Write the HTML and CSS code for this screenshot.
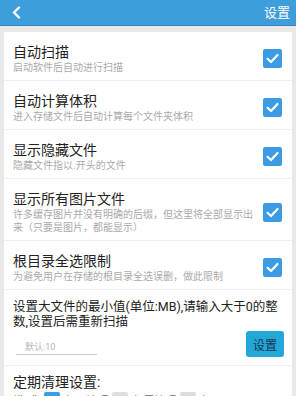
FILE: index.html
```html
<!DOCTYPE html>
<html>
<head>
  <meta charset="utf-8">
  <title>设置</title>
  <link rel="stylesheet" href="styles.css">
</head>
<body>
  <div class="topbar">
    <span class="back">
      <svg width="9" height="13" viewBox="0 0 9 13"><path d="M7 1.5 L2 6.5 L7 11.5" fill="none" stroke="#fff" stroke-width="2.4" stroke-linecap="round" stroke-linejoin="round"/></svg>
    </span>
    <span class="title">设置</span>
  </div>

  <div class="card">
    <!-- checkbox rows -->
    <div class="row">
      <div class="text">
        <div class="name">自动扫描</div>
        <div class="desc">启动软件后自动进行扫描</div>
      </div>
      <span class="check"><svg width="19" height="19" viewBox="0 0 19 19"><path d="M4.5 9.8 L8 13 L14.5 6" fill="none" stroke="#fff" stroke-width="2.2" stroke-linecap="round" stroke-linejoin="round"/></svg></span>
    </div>

    <div class="row">
      <div class="text">
        <div class="name">自动计算体积</div>
        <div class="desc">进入存储文件后自动计算每个文件夹体积</div>
      </div>
      <span class="check"><svg width="19" height="19" viewBox="0 0 19 19"><path d="M4.5 9.8 L8 13 L14.5 6" fill="none" stroke="#fff" stroke-width="2.2" stroke-linecap="round" stroke-linejoin="round"/></svg></span>
    </div>

    <div class="row">
      <div class="text">
        <div class="name">显示隐藏文件</div>
        <div class="desc">隐藏文件指以.开头的文件</div>
      </div>
      <span class="check"><svg width="19" height="19" viewBox="0 0 19 19"><path d="M4.5 9.8 L8 13 L14.5 6" fill="none" stroke="#fff" stroke-width="2.2" stroke-linecap="round" stroke-linejoin="round"/></svg></span>
    </div>

    <div class="row">
      <div class="text">
        <div class="name">显示所有图片文件</div>
        <div class="desc">许多缓存图片并没有明确的后缀，但这里将全部显示出来（只要是图片，都能显示）</div>
      </div>
      <span class="check"><svg width="19" height="19" viewBox="0 0 19 19"><path d="M4.5 9.8 L8 13 L14.5 6" fill="none" stroke="#fff" stroke-width="2.2" stroke-linecap="round" stroke-linejoin="round"/></svg></span>
    </div>

    <div class="row">
      <div class="text">
        <div class="name">根目录全选限制</div>
        <div class="desc">为避免用户在存储的根目录全选误删，做此限制</div>
      </div>
      <span class="check"><svg width="19" height="19" viewBox="0 0 19 19"><path d="M4.5 9.8 L8 13 L14.5 6" fill="none" stroke="#fff" stroke-width="2.2" stroke-linecap="round" stroke-linejoin="round"/></svg></span>
    </div>

    <!-- big file size -->
    <div class="size-row">
      <div class="size-label">设置大文件的最小值(单位:MB),请输入大于0的整数,设置后需重新扫描</div>
      <div class="size-form">
        <input class="size-input" type="text" placeholder="默认:10">
        <button class="btn">设置</button>
      </div>
    </div>

    <!-- periodic cleaning -->
    <div class="clean-row">
      <div class="clean-title">定期清理设置:</div>
      <div class="clean-opts">
        <span>模 式:</span>
        <span class="mini on"></span><span>每天清理</span>
        <span class="mini"></span><span>每周清理</span>
        <span class="mini"></span><span>每月</span>
      </div>
    </div>
  </div>
</body>
</html>
```

FILE: styles.css
```css
body {
  margin: 0;
  background-color: #e9e9e9;
  font-family: Roboto, "Noto Sans CJK SC", sans-serif;
  overflow: hidden;
}
.topbar {
  height: 25px;
  background-color: #3e9edb;
  border-bottom: 1px solid #2f86c0;
  display: flex;
  align-items: center;
  justify-content: space-between;
  padding: 0 6px 0 12px;
}
.back {
  display: flex;
}
.title {
  color: #fff;
  font-size: 13px;
  line-height: 25px;
}
.card {
  margin: 6px 4px 0 4px;
  background-color: #fff;
}
.row {
  display: flex;
  align-items: center;
  padding: 11px 10px 6px 9px;
  border-bottom: 1px solid #efefef;
}
.text {
  flex: 1;
}
.name {
  font-size: 14px;
  line-height: 18px;
  color: #222;
}
.desc {
  font-size: 10px;
  line-height: 13px;
  color: #aaa;
  padding-right: 6px;
}
.check {
  width: 19px;
  height: 19px;
  border-radius: 2px;
  background-color: #3d9be3;
  flex-shrink: 0;
  margin-left: 4px;
}
.check svg {
  display: block;
}
.size-row {
  padding: 9px 8px 8px 9px;
  border-bottom: 1px solid #efefef;
}
.size-label {
  font-size: 12.5px;
  line-height: 15px;
  color: #222;
  padding-right: 0;
}
.size-form {
  display: flex;
  justify-content: space-between;
  align-items: center;
  margin-top: 2px;
}
.size-input {
  width: 72px;
  margin: 8px 0 0 3px;
  border: 0;
  border-bottom: 1px solid #ccc;
  padding: 0 0 2px 9px;
  font-family: inherit;
  font-size: 9px;
  outline: none;
}
.size-input::placeholder {
  color: #b5b5b5;
}
.btn {
  width: 38px;
  height: 26px;
  border: 0;
  border-radius: 3px;
  background-color: #22a7d8;
  color: #1b3550;
  font-family: inherit;
  font-size: 12px;
  padding: 0;
}
.clean-row {
  padding: 7px 9px;
}
.clean-title {
  font-size: 14px;
  line-height: 18px;
  color: #222;
}
.clean-opts {
  display: flex;
  align-items: center;
  gap: 4px;
  margin-top: 1px;
  font-size: 11px;
  color: #666;
}
.mini {
  width: 16px;
  height: 16px;
  border-radius: 2px;
  background-color: #ddd;
}
.mini.on {
  background-color: #3d9be3;
}
```
